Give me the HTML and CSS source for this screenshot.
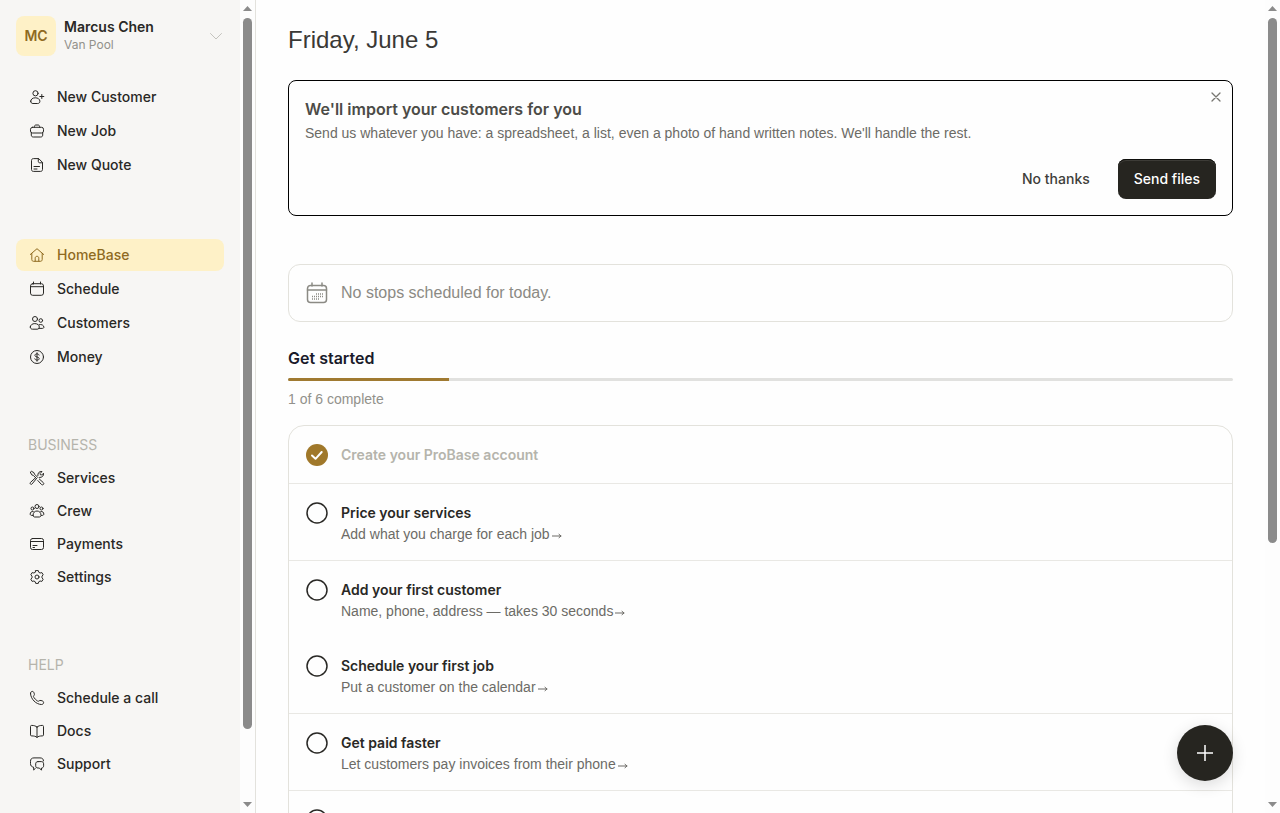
FILE: index.html
```
<!DOCTYPE html>
<html lang="en">
<head>
<meta charset="utf-8">
<meta name="viewport" content="width=device-width, initial-scale=1">
<title>HomeBase</title>
<link rel="stylesheet" href="styles.css">
</head>
<body>
<div class="app">
  <aside class="sidebar">
    <button class="profile" type="button">
      <span class="avatar">MC</span>
      <span class="who"><span class="name">Marcus Chen</span><span class="company">Van Pool</span></span>
      <svg class="chevron" viewBox="0 0 16 16"><path d="M2.500 5.500l5.500 5.500 5.500-5.500"/></svg>
    </button>
    <nav class="group quick" aria-label="Create">
      <a class="item" href="#"><svg class="icon" viewBox="0 0 16 16"><circle cx="6.500" cy="4.300" r="2.600"/><path d="M1.700 12.200c0-2 2-3.400 4.600-3.400s4.600 1.400 4.600 3.400c0 1.500-.9 2.300-2.200 2.300H3.900c-1.300 0-2.200-.8-2.200-2.300zM12.800 5.500v4M10.800 7.500h4"/></svg>New Customer</a>
      <a class="item" href="#"><svg class="icon" viewBox="0 0 16 16"><path d="M5.300 4.300c0-1.700.6-2.300 1.700-2.300h2c1.100 0 1.700.6 1.700 2.300"/><rect x="1.500" y="4.300" width="13" height="5.700" rx="2"/><path d="M2.300 9.800v2.200c0 1.300.7 2 2 2h7.400c1.300 0 2-.7 2-2V9.800"/></svg>New Job</a>
      <a class="item" href="#"><svg class="icon" viewBox="0 0 16 16"><path d="M9.300 1.600H4.500c-1.300 0-2 .7-2 2v8.800c0 1.300.7 2 2 2h7c1.300 0 2-.7 2-2V5.800zM9.300 1.600v2.700c0 1 .5 1.500 1.500 1.500h2.700M5 9.500h5.500M5 12h3"/></svg>New Quote</a>
    </nav>
    <nav class="group primary" aria-label="Main">
      <a class="item active" href="#" aria-current="page"><svg class="icon" viewBox="0 0 16 16"><path d="M1.300 7.500L8 1.700l6.700 5.800M2.800 6.500v6c0 1.100.7 1.800 1.800 1.800h6.800c1.100 0 1.800-.7 1.800-1.800v-6M6.200 14v-2.800c0-1.200.7-1.900 1.800-1.900s1.800.7 1.800 1.900V14"/></svg>HomeBase</a>
      <a class="item" href="#"><svg class="icon" viewBox="0 0 16 16"><rect x="1.500" y="2.700" width="13" height="11.600" rx="2.200"/><path d="M1.500 5.700h13M4.500 1v2M11.500 1v2"/></svg>Schedule</a>
      <a class="item" href="#"><svg class="icon" viewBox="0 0 16 16"><circle cx="6" cy="4" r="2.500"/><circle cx="11.800" cy="5.500" r="1.800"/><path d="M1.300 12c0-2 2-3.400 4.500-3.400s4.500 1.400 4.500 3.400c0 1.400-.9 2.200-2.200 2.200H3.500c-1.300 0-2.200-.8-2.200-2.200zM10 9.700c2.500-.8 4.900.6 4.900 2.500 0 .7-.6 1.200-1.500 1.200h-3.600"/></svg>Customers</a>
      <a class="item" href="#"><svg class="icon" viewBox="0 0 16 16"><circle cx="8" cy="8" r="6.500"/><path d="M10.100 6.100c-.2-.8-1-1.200-2.100-1.200-1.200 0-2.100.5-2.100 1.500 0 2.200 4.300 1 4.300 3.200 0 1-.9 1.500-2.200 1.500-1.200 0-2-.5-2.200-1.300M8 3.800v8.400"/></svg>Money</a>
    </nav>
    <h2 class="label business">BUSINESS</h2>
    <nav class="group tight" aria-label="Business">
      <a class="item" href="#"><svg class="icon" viewBox="0 0 16 16"><path d="M1.400 2.300l1-1 2.500 1.300.6 1.600 3.300 3.300M1.400 2.300l1.300 2.500 1.600.6 3.200 3.200M10.300 9l4 3.600c.7.700.6 1.400.1 1.900s-1.300.5-2-.1L8.800 10.500M7.300 8.800l-4.200 5.100c-.6.700-1.200.6-1.600.2s-.6-1.100.1-1.800l5-4.600M8.800 5.600C8.500 3.200 10.300 1 13 1.500l-1.900 2 .3 1.300 1.300.2 1.800-1.800c.5 2.500-1.500 4.600-4 4.300"/></svg>Services</a>
      <a class="item" href="#"><svg class="icon" viewBox="0 0 16 16"><circle cx="8" cy="3.500" r="2"/><circle cx="3.500" cy="5.500" r="1.500"/><circle cx="12.500" cy="5.500" r="1.500"/><path d="M4 12.300c0-2.700 1.700-4.300 4-4.300s4 1.600 4 4.300c0 1-.7 1.700-1.700 1.700H5.700c-1 0-1.700-.7-1.700-1.700zM4.200 8.500C2.400 8.200 1.200 9.300 1.200 11c0 1 .5 1.500 2.300 1.500M11.800 8.500c1.800-.3 3 .8 3 2.500 0 1-.5 1.500-2.300 1.500"/></svg>Crew</a>
      <a class="item" href="#"><svg class="icon" viewBox="0 0 16 16"><rect x="1.500" y="2.500" width="13" height="11" rx="2"/><path d="M1.500 5.500h13M4 9.500h4M4 11.500h1.500"/></svg>Payments</a>
      <a class="item" href="#"><svg class="icon" viewBox="0 0 16 16"><circle cx="8" cy="8" r="2"/><path d="M6.700 1.600h2.600l.5 1.700 1.300.7 1.800-.4 1.300 2.200L13 7.100v1.800l1.200 1.300-1.300 2.200-1.800-.4-1.300.7-.5 1.700H6.700l-.5-1.700-1.300-.7-1.800.4-1.300-2.200L3 8.900V7.100L1.800 5.800l1.300-2.200 1.800.4 1.300-.7z"/></svg>Settings</a>
    </nav>
    <h2 class="label help">HELP</h2>
    <nav class="group tight" aria-label="Help">
      <a class="item" href="#"><svg class="icon" viewBox="0 0 16 16"><path d="M1.500 3.300c0-1 .8-1.900 1.900-1.900 1.200 0 1.500 1.200 1.900 2.400.3 1-.1 1.500-.6 2-.5.6-.2 1.200.6 2.200s1.600 1.900 2.600 2.600c.9.700 1.500.8 2 .4.600-.5 1.100-.8 2.100-.5 1.400.4 2.600.7 2.600 2 0 1.200-.9 2-2 2C7.200 14.500 1.500 9 1.500 3.300z"/></svg>Schedule a call</a>
      <a class="item" href="#"><svg class="icon" viewBox="0 0 16 16"><path d="M8 4c-1.200-1-3-1.600-5.400-1.600-.7 0-1.100.4-1.100 1.100v8.400c0 .7.400 1 1.100 1 2.300 0 4.200.4 5.400 1.500 1.200-1.100 3.100-1.500 5.400-1.500.7 0 1.100-.3 1.100-1V3.500c0-.7-.4-1.100-1.100-1.100C11 2.400 9.200 3 8 4zM8 4v10.400"/></svg>Docs</a>
      <a class="item" href="#"><svg class="icon" viewBox="0 0 16 16"><path d="M4.800 13.700l-.3-2.600c-2-.2-3-1.500-3-3.500V5.400c0-2.400 1.200-3.500 3.500-3.500h6c2.300 0 3.500 1.100 3.500 3M4.800 13.700l1.500-1.200M9 5.600h3.300c1.500 0 2.300.8 2.300 2.200v2c0 1.300-.7 2.100-2 2.200l-.2 2.200-2-2.200H9c-1.500 0-2.300-.8-2.300-2.200v-2c0-1.400.8-2.200 2.300-2.200z"/></svg>Support</a>
    </nav>
  </aside>
  <div class="track side-track" aria-hidden="true">
    <svg class="arrow" viewBox="0 0 9 5"><path d="M4.500 0L9 5H0z"/></svg><div class="rail"><div class="thumb"></div></div><svg class="arrow" viewBox="0 0 9 5"><path d="M0 0h9L4.500 5z"/></svg>
  </div>
  <main class="content">
    <h1 class="date">Friday, June 5</h1>
    <section class="import">
      <button class="close" type="button" aria-label="Close"><svg viewBox="0 0 10 10"><path d="M1 1l8 8M9 1L1 9"/></svg></button>
      <h2 class="import-title">We'll import your customers for you</h2>
      <p class="import-text">Send us whatever you have: a spreadsheet, a list, even a photo of hand written notes. We'll handle the rest.</p>
      <div class="actions"><button class="btn" type="button">No thanks</button><button class="btn dark" type="button">Send files</button></div>
    </section>
    <section class="empty">
      <svg class="cal" viewBox="0 0 24 24"><rect x="2.500" y="4.500" width="19" height="17" rx="3"/><path d="M2.500 9h19M7 2v3M17 2v3"/><path class="dots" d="M7 15.500h11M7 18h8M11 13h7"/></svg>
      <span>No stops scheduled for today.</span>
    </section>
    <h2 class="started">Get started</h2>
    <div class="progress" role="progressbar" aria-label="Get started" aria-valuemin="0" aria-valuemax="6" aria-valuenow="1"><div class="bar" style="width:17%"></div></div>
    <p class="count">1 of 6 complete</p>
    <ul class="steps">
      <li class="step done"><svg class="mark" viewBox="0 0 22 22"><circle cx="11" cy="11" r="11"/><path d="M6 11.500l3.500 3.300L15.700 8"/></svg><span class="step-title">Create your ProBase account</span></li>
      <li class="step"><svg class="mark" viewBox="0 0 22 22"><circle cx="11" cy="11" r="10"/></svg><a class="step-body" href="#"><span class="step-title">Price your services</span><span class="hint">Add what you charge for each job<svg class="go" viewBox="0 0 10 6"><path d="M0 3h9M7 1.300L9 3 7 4.700"/></svg></span></a></li>
      <li class="step joined"><svg class="mark" viewBox="0 0 22 22"><circle cx="11" cy="11" r="10"/></svg><a class="step-body" href="#"><span class="step-title">Add your first customer</span><span class="hint">Name, phone, address — takes 30 seconds<svg class="go" viewBox="0 0 10 6"><path d="M0 3h9M7 1.300L9 3 7 4.700"/></svg></span></a></li>
      <li class="step"><svg class="mark" viewBox="0 0 22 22"><circle cx="11" cy="11" r="10"/></svg><a class="step-body" href="#"><span class="step-title">Schedule your first job</span><span class="hint">Put a customer on the calendar<svg class="go" viewBox="0 0 10 6"><path d="M0 3h9M7 1.300L9 3 7 4.700"/></svg></span></a></li>
      <li class="step"><svg class="mark" viewBox="0 0 22 22"><circle cx="11" cy="11" r="10"/></svg><a class="step-body" href="#"><span class="step-title">Get paid faster</span><span class="hint">Let customers pay invoices from their phone<svg class="go" viewBox="0 0 10 6"><path d="M0 3h9M7 1.300L9 3 7 4.700"/></svg></span></a></li>
      <li class="step last"><svg class="mark" viewBox="0 0 22 22"><circle cx="11" cy="11" r="10"/></svg></li>
    </ul>
  </main>
  <div class="track main-track" aria-hidden="true">
    <svg class="arrow" viewBox="0 0 9 5"><path d="M4.500 0L9 5H0z"/></svg><div class="rail"><div class="thumb"></div></div><svg class="arrow" viewBox="0 0 9 5"><path d="M0 0h9L4.500 5z"/></svg>
  </div>
</div>
<button class="fab" type="button" aria-label="Add"><svg viewBox="0 0 18 18"><path d="M9 1v16M1 9h16"/></svg></button>
</body>
</html>
```
FILE: styles.css
```
* { box-sizing: border-box; }
body { margin: 0; font-family: Inter, "Liberation Sans", sans-serif; font-size: 14px; line-height: 20px; color: #292825; background: #fefefe; }
h1, h2, p, ul { margin: 0; padding: 0; font-weight: 400; }
button { font: inherit; color: inherit; border: 0; padding: 0; background: none; cursor: pointer; }
a { color: inherit; text-decoration: none; }
svg { display: block; flex: none; fill: none; stroke: currentColor; stroke-linecap: round; stroke-linejoin: round; }
.date, .import-text, .empty, .count, .hint { font-family: "Liberation Sans", Arial, sans-serif; }

.app { display: flex; height: 100vh; overflow: hidden; }
.sidebar { flex: none; width: 240px; padding: 16px; overflow: hidden; background: #f7f6f4; }

.profile { display: flex; align-items: center; gap: 8px; width: 100%; text-align: left; }
.avatar { width: 40px; height: 40px; border-radius: 8px; background: #fef1c7; color: #8f6a1f; font-weight: 600; line-height: 40px; text-align: center; }
.who { display: flex; flex-direction: column; flex: 1; line-height: 18px; }
.name { font-weight: 600; }
.company { font-size: 12px; color: #92918b; }
.chevron { width: 16px; height: 16px; color: #c4c3be; stroke-width: 1; }

.group { display: flex; flex-direction: column; gap: 2px; }
.tight { gap: 1px; }
.quick { margin-top: 25px; }
.primary { margin-top: 58px; }
.item { display: flex; align-items: center; gap: 12px; height: 32px; padding: 0 13px; border-radius: 8px; font-weight: 500; }
.active { background: #fef1c7; color: #8f6a1f; }
.icon { width: 16px; height: 16px; stroke-width: 1; }
.label { padding-left: 12px; font-size: 14px; color: #b5b4ac; }
.business { margin: 62px 0 7px; }
.help { margin: 62px 0 7px; }

.track { display: flex; flex-direction: column; align-items: center; flex: none; width: 15px; padding: 6px 0; gap: 7px; background: #fdfdfd; }
.side-track { width: 16px; border-right: 1px solid #e3e2dd; }
.arrow { width: 9px; height: 5px; fill: #8b8b8b; stroke: none; }
.rail { flex: 1; width: 9px; }
.thumb { border-radius: 5px; background: #8b8b8b; }
.side-track .thumb { height: 91.5%; }
.main-track .thumb { height: 67.6%; }

.content { flex: 1; min-width: 0; padding: 24px 32px 0; overflow: hidden; }
.date { font-size: 24px; line-height: 32px; color: #3a3936; }
.import { position: relative; margin-top: 24px; padding: 16px; border: 1px solid #000; border-radius: 8px; }
.close { position: absolute; top: 7px; right: 7px; padding: 4px; color: #777671; }
.close svg { width: 10px; height: 10px; stroke-width: 1.300; }
.import-title { font-size: 16px; line-height: 24px; font-weight: 600; color: #4c4b47; }
.import-text { margin-top: 2px; color: #6c6b66; }
.actions { display: flex; justify-content: flex-end; gap: 12px; margin-top: 16px; }
.btn { height: 40px; padding: 0 16px; border-radius: 8px; font-weight: 500; color: #3f3e3a; }
.dark { background: #262520; color: #fff; box-shadow: inset 0 1px #0f0f0c, inset 0 2px #3d3c37; }

.empty { display: flex; align-items: center; gap: 12px; margin-top: 48px; padding: 16px; border: 1px solid #e3e2dc; border-radius: 12px; font-size: 16px; line-height: 24px; color: #8b8a84; }
.cal { width: 24px; height: 24px; stroke-width: 1.5; }
.dots { stroke-dasharray: 1 1; stroke-linecap: butt; }

.started { margin-top: 24px; font-size: 16px; line-height: 24px; font-weight: 600; color: #1a1a2a; }
.progress { height: 3px; margin-top: 8px; border-radius: 2px; background: #e1e1df; overflow: hidden; }
.bar { height: 3px; background: #a07a31; }
.count { margin-top: 8px; color: #92918b; }

.steps { margin-top: 16px; border: 1px solid #e3e2dc; border-radius: 16px; list-style: none; }
.step { display: flex; align-items: flex-start; gap: 13px; padding: 18px 17px 17px; border-bottom: 1px solid #e9e8e4; }
.joined { border-bottom: 0; }
.mark { width: 22px; height: 22px; stroke-width: 1.5; }
.step-body { display: flex; flex-direction: column; gap: 1px; }
.step-title { line-height: 22px; font-weight: 600; }
.hint { display: flex; align-items: center; gap: 2px; line-height: 18px; color: #6c6b66; }
.go { width: 10px; height: 6px; margin-top: 3px; }
.done .step-title { color: #b5b4ac; }
.done .mark { color: #a0782a; }
.done .mark circle { fill: currentColor; stroke: none; }
.done .mark path { stroke: #fff; stroke-width: 2; }
.last { border-bottom: 0; }

.fab { position: fixed; right: 47px; bottom: 32px; display: grid; place-items: center; width: 56px; height: 56px; border-radius: 50%; background: #262520; color: #fff; box-shadow: 0 4px 16px rgba(0, 0, 0, .14); }
.fab svg { width: 18px; height: 18px; stroke-width: 1.5; stroke-linecap: butt; }
```
